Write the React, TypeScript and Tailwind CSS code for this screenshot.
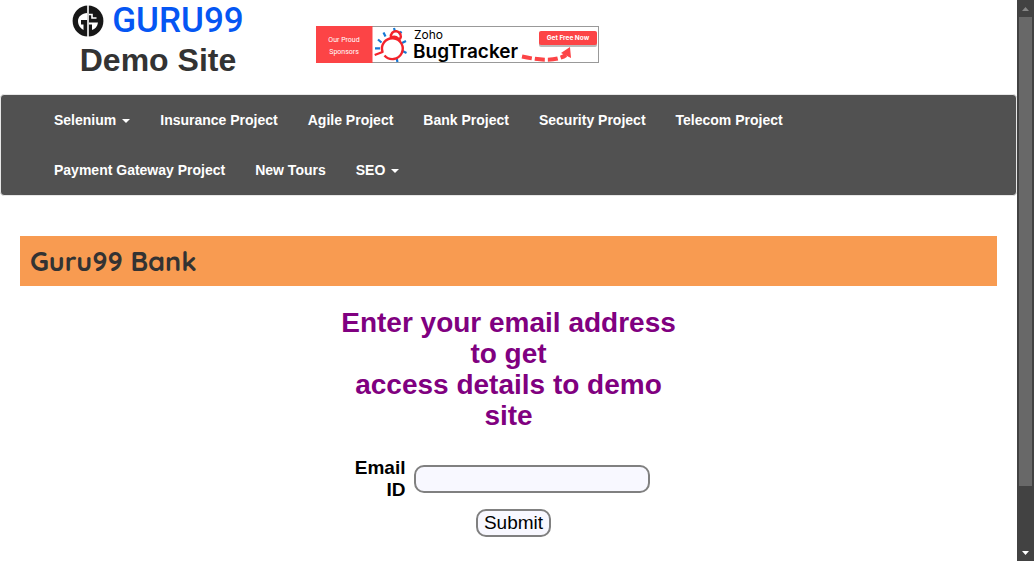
import React from "react";

type NavItem = { label: string; menu?: boolean };

const navItems: NavItem[] = [
  { label: "Selenium", menu: true },
  { label: "Insurance Project" },
  { label: "Agile Project" },
  { label: "Bank Project" },
  { label: "Security Project" },
  { label: "Telecom Project" },
  { label: "Payment Gateway Project" },
  { label: "New Tours" },
  { label: "SEO", menu: true },
];

function GuruMark() {
  return (
    <svg viewBox="0 0 32 32" className="h-8 w-8 shrink-0" aria-hidden="true">
      <circle cx="16" cy="16" r="15.400" fill="#171717" />
      <path d="M16 0V32" stroke="#fff" strokeWidth="1.600" />
      <path d="M15.200 8C10 8.500 6 11.500 6 16C6 20 8.500 23.500 11.500 25V19.500H9V15H15.200Z" fill="#fff" />
      <path d="M16.800 17.500H26C25.500 21.500 23 24 20 25V19.500H16.800Z" fill="#fff" />
      <path d="M16.800 9.500H20V13H24.500" fill="none" stroke="#fff" strokeWidth="1.600" />
    </svg>
  );
}

function SponsorBanner() {
  return (
    <svg viewBox="0 0 283 37" className="h-[37px] w-[283px]" role="img" aria-label="Zoho BugTracker">
      <rect x="0.5" y="0.5" width="282" height="36" fill="#fff" stroke="#999" />
      <rect width="56.500" height="37" fill="#fc4446" />
      <g fill="#fff" fontFamily="Roboto, sans-serif" fontSize="7" textAnchor="middle">
        <text x="28" y="16">Our Proud</text>
        <text x="28" y="28">Sponsors</text>
      </g>
      <path
        d="M78 2L79 5.500M85.500 5.500L83 8.500M90 15L86 17M90.500 27L86.500 25M81.500 36L80.500 32M62 13.500L65.500 16.500M67.500 6.500L69.500 10.500M59 22.300H64"
        fill="none"
        stroke="#1577d3"
        strokeWidth="2.200"
      />
      <path
        d="M58.700 29L66.500 26A10.400 10.400 0 1 1 68.500 29.500M75 11.500A5 5 0 1 1 84 13M75 11.500C79 9.500 82 11 84 15"
        fill="none"
        stroke="#f4232b"
        strokeWidth="2.400"
        strokeLinejoin="round"
      />
      <g fill="#000" fontFamily="Inter, sans-serif">
        <text x="98" y="13" fontSize="12">Zoho</text>
        <text x="97" y="32" fontSize="19" fontWeight="600">BugTracker</text>
      </g>
      <rect x="223" y="6" width="58" height="15" rx="2" fill="#bbb" />
      <rect x="223" y="5" width="58" height="14" rx="2" fill="#fc4446" />
      <text
        x="252"
        y="13.500"
        fill="#fff"
        fontFamily="Inter, sans-serif"
        fontSize="6.500"
        fontWeight="700"
        textAnchor="middle"
      >
        Get Free Now
      </text>
      <path d="M206 30.500C222 34 240 36 250 29" fill="none" stroke="#fc4446" strokeWidth="4" strokeDasharray="10 3" />
      <path d="M254 21L255 32L245 27Z" fill="#fc4446" />
    </svg>
  );
}

function ScrollRail() {
  return (
    <div aria-hidden="true" className="flex w-[17px] shrink-0 flex-col items-center bg-[#424242]">
      <div className="flex h-[17px] items-center">
        <svg viewBox="0 0 7 4" className="h-1 w-[7px]">
          <path d="M3.500 0L7 4H0Z" fill="#868686" />
        </svg>
      </div>
      <div className="w-[13px] grow-[469] bg-[#686868]" />
      <div className="grow-[58]" />
      <div className="flex h-[17px] items-center">
        <svg viewBox="0 0 7 4" className="h-1 w-[7px]">
          <path d="M0 0H7L3.500 4Z" fill="#fff" />
        </svg>
      </div>
    </div>
  );
}

export default function App() {
  return (
    <div className="flex min-h-screen bg-white font-['Liberation_Sans',Arial,sans-serif]">
      <div className="min-w-0 flex-1">
        <header className="flex items-start">
          <div className="flex w-[316px] flex-col items-center pt-[5px]">
            <a href="#home" className="flex items-center gap-2">
              <GuruMark />
              <span className="font-['Roboto',sans-serif] text-[35px] leading-8 font-medium text-[#0556f3]">
                GURU99
              </span>
            </a>
            <h2 className="text-[32px] leading-[46px] font-bold text-[#333]">Demo Site</h2>
          </div>
          <a href="#sponsor" className="mt-[26px]">
            <SponsorBanner />
          </a>
        </header>

        <nav className="mt-[11px] rounded border border-[#e7e7e7] bg-[#515151] pr-10 pl-[38px]">
          <ul className="flex flex-wrap">
            {navItems.map((item) => (
              <li key={item.label}>
                <a
                  href="#"
                  className="flex items-center px-[15px] py-[15px] text-sm font-bold text-white"
                >
                  {item.label}
                  {item.menu && (
                    <svg viewBox="0 0 8 4" className="mt-px ml-1.5 h-1 w-2" aria-hidden="true">
                      <path d="M0 0H8L4 4Z" fill="currentColor" />
                    </svg>
                  )}
                </a>
              </li>
            ))}
          </ul>
        </nav>

        <main className="px-5 pt-10">
          <h1 className="bg-[#f89b51] px-2.5 font-['Quicksand',sans-serif] text-[27px] leading-[50px] font-bold text-[#333]">
            Guru99 Bank
          </h1>
          <form className="mx-auto mt-[21px] flex w-[340px] flex-col items-center" onSubmit={(e) => e.preventDefault()}>
            <h2 className="text-center text-[28px] leading-[31px] font-bold text-[#800080]">
              Enter your email address to get
              <br />
              access details to demo site
            </h2>
            <div className="mt-[26px] flex items-center gap-2 pr-[18px]">
              <label htmlFor="email" className="w-14 text-right text-[19px] leading-[22px] font-bold text-black">
                Email ID
              </label>
              <input
                id="email"
                type="text"
                className="h-7 w-[236px] rounded-[10px] border-2 border-[#808080] bg-[#f8f8ff] px-2 text-[19px] text-black"
              />
            </div>
            <button
              type="submit"
              className="mt-2 ml-2.5 h-7 rounded-[10px] border-2 border-[#808080] bg-[#f8f8ff] px-1.5 text-[19px] leading-6 text-black"
            >
              Submit
            </button>
          </form>
        </main>
      </div>
      <ScrollRail />
    </div>
  );
}
